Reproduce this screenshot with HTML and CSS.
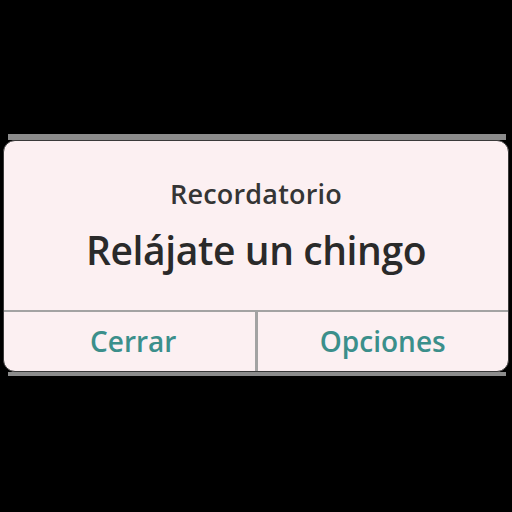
FILE: index.html
```html
<!DOCTYPE html>
<html lang="es">
<head>
<meta charset="utf-8">
<link rel="stylesheet" href="styles.css">
</head>
<body>
<div class="frame">
  <div class="strip strip-top"></div>
  <div class="card">
    <div class="content">
      <div class="label">Recordatorio</div>
      <div class="title">Relájate un chingo</div>
    </div>
    <div class="actions">
      <div class="btn btn-left">Cerrar</div>
      <div class="sep"></div>
      <div class="btn">Opciones</div>
    </div>
  </div>
  <div class="strip strip-bottom"></div>
</div>
</body>
</html>
```
FILE: styles.css
```css
html, body {
  margin: 0;
  padding: 0;
  background: #000;
  width: 512px;
  height: 512px;
  overflow: hidden;
}
.frame {
  padding-top: 134px;
  display: flex;
  flex-direction: column;
}
.strip {
  background: #8c8c8c;
  margin: 0 6px 0 8px;
}
.strip-top { height: 6px; }
.strip-bottom { height: 4px; }
.card {
  margin: 0 3px;
  height: 232px;
  box-sizing: border-box;
  border: 1px solid #3a3a3a;
  border-radius: 12px;
  background: #fcf0f2;
  display: flex;
  flex-direction: column;
  overflow: hidden;
  font-family: "Open Sans", "Noto Sans", sans-serif;
}
.content {
  height: 171px;
  display: flex;
  flex-direction: column;
  align-items: center;
  padding-top: 36px;
  box-sizing: border-box;
  border-bottom: 2px solid #a3a3a3;
}
.label {
  font-size: 27px;
  font-weight: 600;
  color: #353535;
  line-height: 34px;
  letter-spacing: 0.2px;
}
.title {
  margin-top: 16px;
  font-size: 39px;
  font-weight: 600;
  color: #2a2a2a;
  line-height: 46px;
  letter-spacing: -0.4px;
}
.actions {
  flex: 1;
  display: grid;
  grid-template-columns: 1fr 3px 1fr;
}
.btn {
  display: flex;
  align-items: center;
  justify-content: center;
  font-size: 28px;
  font-weight: 600;
  color: #3b8f8b;
  letter-spacing: 0;
  padding-bottom: 2px;
  min-width: 0;
}
.btn-left {
  padding-left: 8px;
}
.sep {
  background: #a3a3a3;
}
```
